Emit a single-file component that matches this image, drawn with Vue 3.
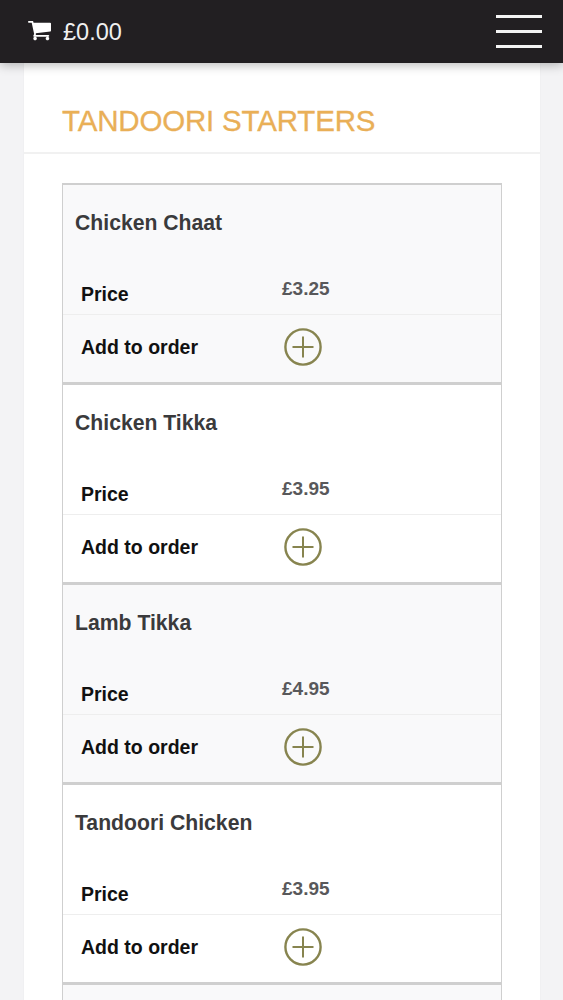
<script setup>
const items = [
  { name: 'Chicken Chaat', price: '£3.25' },
  { name: 'Chicken Tikka', price: '£3.95' },
  { name: 'Lamb Tikka', price: '£4.95' },
  { name: 'Tandoori Chicken', price: '£3.95' },
]
</script>

<template>
  <div class="page">
    <header class="topbar">
      <div class="cart">
        <svg class="cart-icon" viewBox="0 0 1664 1792" aria-hidden="true">
          <path fill="#fff" d="M640 1408q0 52-38 90t-90 38-90-38-38-90 38-90 90-38 90 38 38 90zm896 0q0 52-38 90t-90 38-90-38-38-90 38-90 90-38 90 38 38 90zm128-1088v512q0 24-16.5 42.5t-40.5 21.5l-1044 122q13 60 13 70 0 16-24 64h920q26 0 45 19t19 45-19 45-45 19h-1024q-26 0-45-19t-19-45q0-11 8-31.5t16-36 21.5-40 15.5-29.5l-177-823h-204q-26 0-45-19t-19-45 19-45 45-19h256q16 0 28.5 6.5t19.5 15.5 13 24.5 8 26 5.5 29.5 4.5 26h1201q26 0 45 19t19 45z"/>
        </svg>
        <span class="total">£0.00</span>
      </div>
      <div class="burger" aria-label="Menu"><i></i><i></i><i></i></div>
    </header>

    <main class="panel">
      <h1 class="title">TANDOORI STARTERS</h1>
      <div class="content">
        <div class="list">
          <section v-for="item in items" :key="item.name" class="item">
            <h2 class="name">{{ item.name }}</h2>
            <div class="row row-price">
              <span class="label">Price</span>
              <span class="price">{{ item.price }}</span>
            </div>
            <div class="row row-add">
              <span class="label">Add to order</span>
              <svg class="plus" viewBox="0 0 38 38" aria-hidden="true">
                <circle cx="19" cy="19" r="17.6" fill="none" stroke="#87844f" stroke-width="2.4"/>
                <path d="M19 8.5v21M8.5 19h21" fill="none" stroke="#87844f" stroke-width="2"/>
              </svg>
            </div>
          </section>
          <section class="item item-next"></section>
        </div>
      </div>
    </main>
  </div>
</template>

<style>
html, body { margin: 0; background: #f3f3f5; }
</style>

<style scoped>
.page {
  height: 1000px;
  overflow: hidden;
  background: #f3f3f5;
  font-family: "Liberation Sans", Arial, sans-serif;
}
.topbar {
  position: relative;
  z-index: 2;
  height: 63px;
  box-sizing: border-box;
  padding: 0 21px 0 28px;
  display: flex;
  align-items: center;
  justify-content: space-between;
  background: #221f22;
  box-shadow: 0 2px 10px rgba(0, 0, 0, 0.28);
}
.cart {
  display: flex;
  align-items: center;
  gap: 12px;
}
.cart-icon {
  width: 23px;
  height: 25px;
  display: block;
}
.total {
  color: #f0f0f0;
  font-size: 23.5px;
  line-height: 28px;
  margin-top: 1px;
}
.burger {
  width: 46px;
  display: flex;
  flex-direction: column;
  gap: 12px;
}
.burger i {
  display: block;
  height: 3px;
  background: #f4f4f4;
}
.panel {
  width: 518px;
  margin-left: 23px;
  background: #fff;
  border-left: 1px solid #f0f0f2;
  border-right: 1px solid #f0f0f2;
  box-sizing: border-box;
}
.title {
  margin: 0;
  height: 91px;
  box-sizing: border-box;
  padding: 41px 0 0 38px;
  border-bottom: 2px solid #f1f1f1;
  color: #e9af57;
  font-size: 29.5px;
  line-height: 34px;
  font-weight: 400;
  letter-spacing: -0.18px;
  -webkit-text-stroke: 0.3px #e9af57;
}
.content {
  padding: 29px 38px 0;
}
.list {
  width: 440px;
  border: 1px solid #cfcfcf;
  border-top-width: 2px;
  border-bottom: none;
  box-sizing: border-box;
}
.item {
  height: 200px;
  box-sizing: border-box;
  border-bottom: 3px solid #cfcfcf;
  background: #fff;
  display: flex;
  flex-direction: column;
}
.item:nth-child(odd) {
  background: #f9f9fa;
}
.name {
  margin: 0;
  height: 129px;
  box-sizing: border-box;
  padding: 25px 0 0 12px;
  color: #3a3a3c;
  font-size: 21.2px;
  line-height: 26px;
  font-weight: 700;
}
.row {
  position: relative;
  display: flex;
  padding-left: 18px;
  box-sizing: border-box;
}
.row-price {
  height: 0;
}
.row-add {
  flex: 1;
  align-items: center;
  border-top: 1px solid #eeeeee;
}
.label {
  width: 201px;
  color: #111;
  font-size: 19.5px;
  line-height: 24px;
  font-weight: 700;
}
.row-add .label {
  margin-top: -3px;
}
.row-price .label {
  margin-top: -32px;
}
.price {
  margin-top: -37px;
  color: #58585a;
  font-size: 19px;
  line-height: 24px;
  font-weight: 700;
}
.plus {
  width: 38px;
  height: 38px;
  display: block;
  margin-left: 2px;
  margin-top: -4px;
}
</style>
